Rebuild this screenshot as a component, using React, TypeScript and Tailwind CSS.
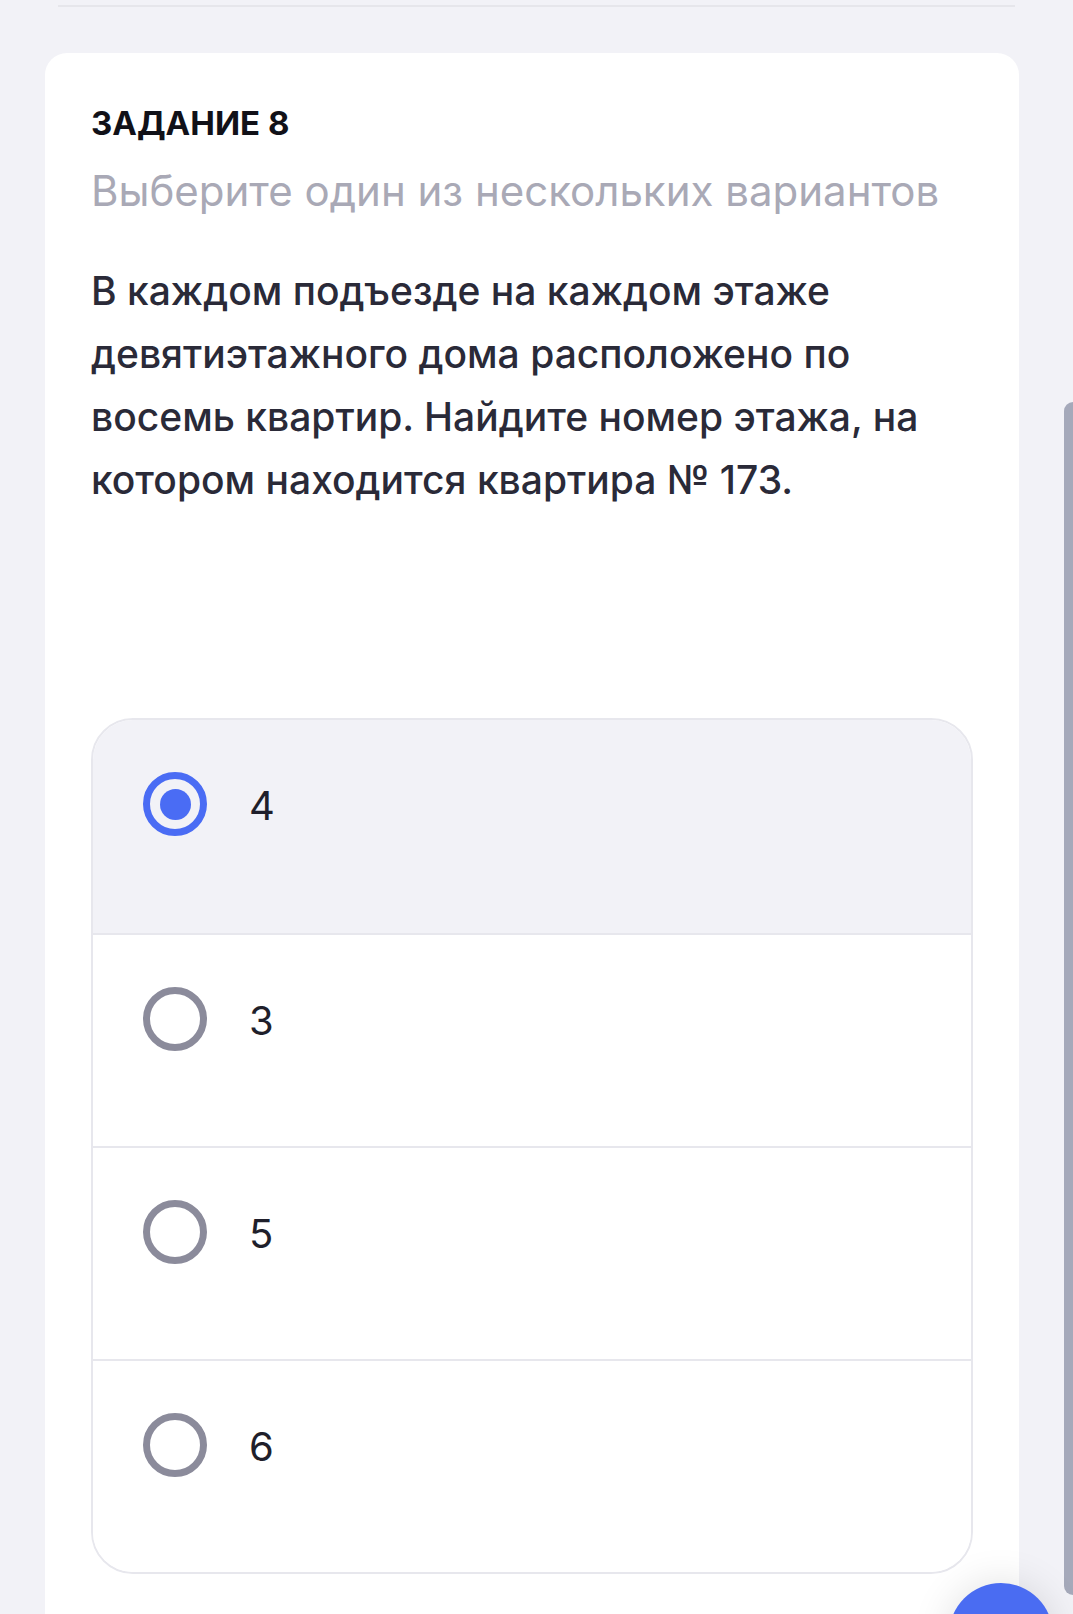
import { useState } from "react";

const options = ["4", "3", "5", "6"];

function Radio({ checked }: { checked: boolean }) {
  return checked ? (
    <span className="flex h-[64px] w-[64px] shrink-0 items-center justify-center rounded-full border-[7px] border-[#4a6cf4]">
      <span className="h-[31px] w-[31px] rounded-full bg-[#4a6cf4]" />
    </span>
  ) : (
    <span className="h-[64px] w-[64px] shrink-0 rounded-full border-[7px] border-[#8b8b9b]" />
  );
}

export default function App() {
  const [selected, setSelected] = useState(0);

  return (
    <div className="relative h-[1614px] overflow-hidden bg-[#f2f2f7] font-['Inter',sans-serif]">
      <div className="mx-[58px] h-[7px] border-b-2 border-[#e6e6eb]" />

      <div className="ml-[45px] mr-[54px] mt-[46px] rounded-[22px] bg-white px-[46px] pb-[120px] pt-[53px]">
        <h2 className="text-[33px] font-bold leading-[34px] text-[#111118]">ЗАДАНИЕ 8</h2>
        <p className="mt-[27px] text-[42px] leading-[48px] text-[#a9a9b6]">
          Выберите один из нескольких вариантов
        </p>
        <p className="mt-[44px] text-[39px] font-medium leading-[63px] text-[#2a2a38]">
          В каждом подъезде на каждом этаже девятиэтажного дома расположено по восемь квартир. Найдите номер этажа, на котором находится квартира № 173.
        </p>

        <div className="mt-[207px] overflow-hidden rounded-[42px] border-2 border-[#e7e7ed]">
          {options.map((o, i) => (
            <button
              key={o}
              onClick={() => setSelected(i)}
              className={`flex h-[213px] w-full items-start gap-[42px] pl-[50px] pt-[52px] text-left ${
                i > 0 ? "border-t-2 border-[#e7e7ed]" : ""
              } ${selected === i ? "bg-[#f2f2f7]" : "bg-white"}`}
            >
              <Radio checked={selected === i} />
              <span className="pt-[2px] text-[40px] leading-[64px] text-[#1f1f2b]">{o}</span>
            </button>
          ))}
        </div>
      </div>

      {/* scrollbar */}
      <div className="absolute right-0 top-[402px] h-[1193px] w-[9px] rounded-l-full bg-[#a5a9ba]" />

      {/* floating action button */}
      <div className="absolute left-[949px] top-[1583px] h-[104px] w-[104px] rounded-full bg-[#4a6cf2] shadow-[0_0_40px_rgba(0,0,0,0.12)]" />
    </div>
  );
}
